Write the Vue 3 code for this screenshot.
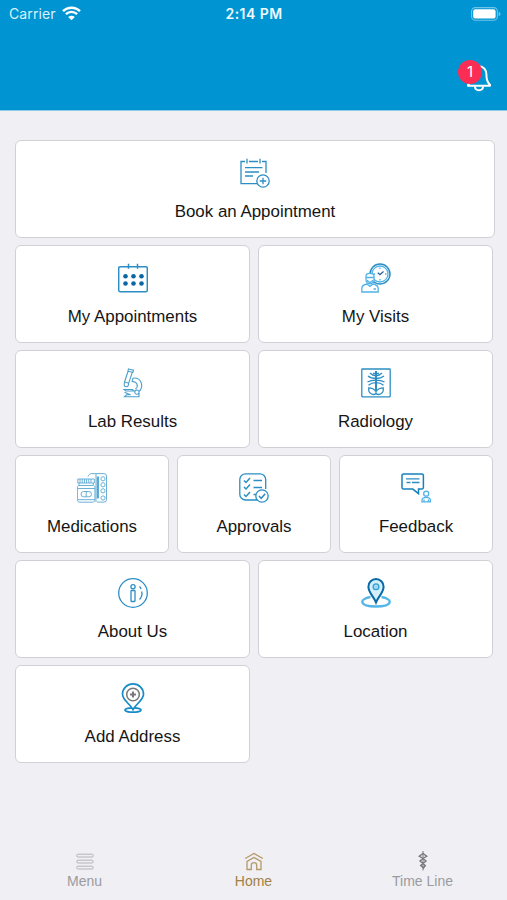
<template>
  <div class="screen">
    <header class="top">
      <div class="status-bar">
        <div class="carrier">
          <span>Carrier</span>
          <svg class="wifi" viewBox="0 0 19 15">
            <path d="M1 5.2C5.8.5 13.2.5 18 5.2M3.9 8.1c3.2-3 8-3 11.2 0" />
            <path class="wifi-dot" d="M6.2 10.9c1.9-1.7 4.7-1.7 6.6 0L9.5 14.3z" />
          </svg>
        </div>
        <span class="time">{{ time }}</span>
        <svg class="battery" viewBox="0 0 30 14">
          <rect class="battery-case" x=".6" y=".6" width="25.8" height="12.6" rx="3.8" />
          <rect class="battery-fill" x="2.2" y="2.2" width="22.4" height="9.4" rx="2.2" />
          <path class="battery-tip" d="M27.7 4.7c2.4.8 2.4 3.6 0 4.4z" />
        </svg>
      </div>
      <div class="nav-bar">
        <button class="bell">
          <svg viewBox="0 0 26 28">
            <path d="M13 2.3C8.5 2.3 5.6 6 5.6 10.5c0 5.5-1.3 8.4-3.6 10.2v1.1h22v-1.1c-2.3-1.8-3.6-4.7-3.6-10.2C20.4 6 17.5 2.3 13 2.3z" />
            <path d="M8.9 22.500c.5 5 7.700 5 8.200 0" />
          </svg>
          <span class="badge">{{ notifications }}</span>
        </button>
      </div>
    </header>

    <main class="tiles">
      <div class="row row-full">
        <div class="tile">
          <svg class="icon" viewBox="0 0 30 30">
            <path d="M5 3.500H1v22.200h16.500M9 3.500h9M22 3.500h4V15M7 .7v4.800M20 .7v4.800" />
            <path d="M5 9.700h17.500M5 14h14M5 18h8" />
            <circle cx="23" cy="23" r="6.200" />
            <path d="M23 19.700v6.600M19.700 23h6.600" />
          </svg>
          <span>Book an Appointment</span>
        </div>
      </div>

      <div class="row">
        <div class="tile">
          <svg class="icon strong" viewBox="0 0 30 30">
            <path d="M2.200 3.700h25.600a1.500 1.500 0 0 1 1.500 1.500v22a1.500 1.500 0 0 1-1.500 1.500H2.200a1.500 1.500 0 0 1-1.500-1.500v-22a1.500 1.500 0 0 1 1.500-1.500zM10.500.7v5M19.500.7v5" />
            <g class="dots">
              <circle v-for="x in [7.5, 15.5, 23.5]" :key="x" :cx="x" cy="13.2" r="2.3" />
              <circle v-for="x in [7.5, 15.5, 23.5]" :key="'b' + x" :cx="x" cy="20.5" r="2.3" />
            </g>
          </svg>
          <span>My Appointments</span>
        </div>
        <div class="tile">
          <svg class="icon" viewBox="0 0 30 30">
            <circle class="ring" cx="19" cy="11" r="10" />
            <circle class="light" cx="19" cy="11" r="8" />
            <path class="light" d="M19 4.500V6M19 16v1.500M12.500 11H14M24 11h1.500" />
            <path class="navy" d="m16.700 9.700 2.300 1.900 3.500-3" />
            <g class="light paper">
              <path d="M5 17v-4c0-3.500 8-3.500 8 0v4c0 5-8 5-8 0z" />
              <path d="M.8 29v-3.500c0-2.800 2.500-4 5.200-4.500l3 2.500 3-2.500c2.700.5 5.200 1.700 5.200 4.500V29z" />
            </g>
            <path class="light" d="M5 14.500h8M6.500 17c0 3 5 3 5 0M12.500 26h2.500" />
          </svg>
          <span>My Visits</span>
        </div>
      </div>

      <div class="row">
        <div class="tile">
          <svg class="icon soft" viewBox="0 0 30 30">
            <path d="m10.500 1 5 1.200-.6 2.200-5-1.200zM10 3.500 6.500 14l4.200 1.200L14.200 4.600M6.800 14.500c-1.300 1.500-.6 4.300 1.500 4.300 1.800 0 2.500-1.600 2-3.600" />
            <path d="M15 10.200c8-1.200 11.500 8 6 13.500v5.100H6.500l2-2h4l-6-2.500M14 13.700c5-.7 7 4.500 3.500 7.300M15 10.200l-1 3.500M6 21.500h8.500l1.500 1.500H8zM21 23.500c-1.200-2.500-4.500-1.500-4.200 1 .2 2.200 3.200 2.400 4.200.5" />
          </svg>
          <span>Lab Results</span>
        </div>
        <div class="tile">
          <svg class="icon" viewBox="0 0 30 30">
            <rect x=".8" y="1" width="28.4" height="27.8" rx=".5" />
            <path class="spine" d="M15 3v19" />
            <path d="M15 7.500c-2.500 0-4.500-.8-6-2.500M15 7.500c2.500 0 4.500-.8 6-2.500M15 10.500c-3.500 0-6-.8-8-2.500M15 10.500c3.500 0 6-.8 8-2.500M15 12.200c-3 0-6 .3-8.500 1.800M15 12.200c3 0 6 .3 8.500 1.800M15 14.700c-3 0-5.500.8-7.500 2.500M15 14.700c3 0 5.500.8 7.500 2.500M12 5.300h6" />
            <path d="M15 23.500c-2-2.800-4.300-3.700-7.300-3.700-.5 4.200 1.500 6.700 5 6.700 1.500 0 2.300-.8 2.300-2 0 1.200.8 2 2.300 2 3.500 0 5.500-2.500 5-6.700-3 0-5.300.9-7.300 3.700z" />
          </svg>
          <span>Radiology</span>
        </div>
      </div>

      <div class="row">
        <div class="tile">
          <svg class="icon fine" viewBox="0 0 30 30">
            <path d="M11 3.500c.8-2 2-2.900 4-2.900h12a2.500 2.500 0 0 1 2.500 2.500v23.500a2.500 2.500 0 0 1-2.500 2.500h-7M19 1v28" />
            <rect class="strip" x="20.2" y="4" width="1.4" height="21" />
            <circle cx="26" cy="5.800" r="2.100" />
            <circle cx="26" cy="11.800" r="2.100" />
            <circle cx="26" cy="17.800" r="2.100" />
            <circle cx="26" cy="25" r="2.100" />
            <path d="M.8 6h16.500v4H.8zM2 10v2.200c-1.300.7-1.600 1.500-1.600 3v11.500c0 1.600 1 2.500 2.500 2.500h12.500c1.500 0 2.500-1 2.500-2.500V15.200c0-1.500-.3-2.300-1.600-3V10M3 6v4M5.200 6v4M7.400 6v4M9.600 6v4M11.800 6v4M14 6v4M.5 15.500h17.400M.5 26.700h17.400M2 12.500h14" />
            <rect x="4" y="18.5" width="10.5" height="5.3" rx="2.65" />
            <path d="M9.200 18.500v5.300" />
          </svg>
          <span>Medications</span>
        </div>
        <div class="tile">
          <svg class="icon" viewBox="0 0 30 30">
            <path d="M18 27H6.500A5.700 5.700 0 0 1 .8 21.300V6.500A5.700 5.700 0 0 1 6.500.8H21a5.700 5.700 0 0 1 5.700 5.700V16" />
            <path class="check" d="m5 7.500 2 2L11 5M5 14l2 2 4-4.500M5 21.500l2 2 4-4.500M14.500 7.500H23M14.500 14.500H23M14.500 21.500H17" />
            <circle cx="23" cy="23" r="6.2" />
            <path class="check" d="m20 23 2.200 2.300 4-4.600" />
          </svg>
          <span>Approvals</span>
        </div>
        <div class="tile">
          <svg class="icon" viewBox="0 0 30 30">
            <path class="bubble" d="M2.600.9h18.200a1.600 1.600 0 0 1 1.600 1.600v12a1.600 1.600 0 0 1-1.600 1.600h-3.300v4.600l-5.700-4.600H2.600A1.600 1.600 0 0 1 1 14.500v-12A1.600 1.600 0 0 1 2.600.9z" />
            <path d="M5 5.800h13.500M11 9.500h7.500M5.500 9.500h4" />
            <circle class="light" cx="25.2" cy="20.7" r="2.5" />
            <path class="light" d="M21 28.800v-1.500c0-4 8.400-4 8.400 0v1.500zM23 26.500v2M27.400 26.500v2" />
          </svg>
          <span>Feedback</span>
        </div>
      </div>

      <div class="row">
        <div class="tile">
          <svg class="icon" viewBox="0 0 30 30">
            <circle cx="15" cy="15" r="14.3" />
            <circle cx="15" cy="8.8" r="2.1" />
            <rect x="13" y="12.5" width="4" height="11" rx=".5" />
            <path d="M21.500 8.500c.7.700 1.200 1.500 1.600 2.500M23.700 13.500c.7 3-.2 6-2.200 8" />
          </svg>
          <span>About Us</span>
        </div>
        <div class="tile">
          <svg class="icon" viewBox="0 0 30 30">
            <path class="orbit" d="M9.500 19c-12 2-11.500 9.500 5.500 9.500s17.500-7.500 5.500-9.500" />
            <path class="pin" d="M15 24.300C13 19 7.400 14.500 7.400 8.700a7.600 7.600 0 0 1 15.200 0C22.600 14.500 17 19 15 24.300z" />
            <circle class="halo" cx="15" cy="8.700" r="2.900" />
          </svg>
          <span>Location</span>
        </div>
      </div>

      <div class="row">
        <div class="tile">
          <svg class="icon" viewBox="0 0 30 30">
            <ellipse class="address" cx="15" cy="27" rx="8" ry="2.2" />
            <path class="address paper" d="M15 26.500C12 21 4.500 17 4.500 11.200a10.500 10.300 0 0 1 21 0C25.500 17 18 21 15 26.500z" />
            <circle class="gray" cx="15" cy="11.500" r="6.300" />
            <path class="gray plus" d="M15 8.500v6M12 11.500h6" />
          </svg>
          <span>Add Address</span>
        </div>
        <div class="tile-spacer"></div>
      </div>
    </main>

    <nav class="tab-bar">
      <a class="tab">
        <svg viewBox="0 0 20 20">
          <rect v-for="y in [3.2, 9.2, 15.2]" :key="y" x="1.7" :y="y" width="16.6" height="2.8" rx="1.4" />
        </svg>
        <span>Menu</span>
      </a>
      <a class="tab active">
        <svg viewBox="0 0 20 20">
          <path d="M1.200 7.500 10 2.500l8.800 5M3 18.500v-8L10 6.500l7 4v8h-4.300v-4.300c0-3.400-5.400-3.400-5.400 0v4.300z" />
        </svg>
        <span>Home</span>
      </a>
      <a class="tab timeline">
        <svg viewBox="0 0 20 20">
          <path d="M10 0v19.500" />
          <path class="snake" d="M10 2.500 6.300 5.300 10 7.500l3 2.500-3 2.500-2.300 2L10 16.500M10 2.500l3.700 2.800L10 7.500 7 10l3 2.500 2.300 2L10 17.500" />
        </svg>
        <span>Time Line</span>
      </a>
    </nav>
  </div>
</template>

<script setup>
import { ref } from 'vue'

const time = ref('2:14 PM')
const notifications = ref(1)
</script>

<style>
body {
  margin: 0;
  background: #efeff4;
}
</style>

<style scoped>
.screen {
  display: flex;
  flex-direction: column;
  width: 100%;
  height: 100vh;
  background: #efeff4;
  font-family: "Liberation Sans", Arial, sans-serif;
}

.top {
  box-sizing: border-box;
  height: 111px;
  background: #0095d2;
  border-bottom: 1px solid #8fcbe6;
  color: #fff;
}

.status-bar {
  display: grid;
  grid-template-columns: 1fr auto 1fr;
  align-items: center;
  height: 27px;
  padding: 0 6px 0 9px;
  font-family: Inter, sans-serif;
  font-size: 14px;
}

.carrier {
  display: flex;
  align-items: center;
  gap: 6px;
  color: #d9f1fb;
  letter-spacing: 0.1px;
}

.wifi {
  width: 19px;
  height: 15px;
  fill: none;
  stroke: #fff;
  stroke-width: 2.4;
}

.wifi-dot {
  fill: #fff;
  stroke: none;
}

.time {
  margin-right: 2px;
  color: #effaff;
  font-weight: 600;
  letter-spacing: 0.45px;
}

.battery {
  justify-self: end;
  width: 30px;
  height: 14px;
}

.battery-case {
  fill: none;
  stroke: #6fc4e8;
  stroke-width: 1.1;
}

.battery-fill {
  fill: #fff;
}

.battery-tip {
  fill: #6fc4e8;
}

.nav-bar {
  display: flex;
  justify-content: flex-end;
  padding: 37px 15px 0;
}

.bell {
  position: relative;
  width: 26px;
  height: 28px;
  padding: 0;
  border: 0;
  background: none;
}

.bell svg {
  display: block;
  width: 26px;
  height: 28px;
  fill: none;
  stroke: #fff;
  stroke-width: 2;
  stroke-linejoin: round;
}

.badge {
  position: absolute;
  top: -4px;
  left: -8px;
  width: 24px;
  height: 24px;
  border-radius: 50%;
  background: #fc2d55;
  color: #fff;
  font-family: Inter, sans-serif;
  font-size: 15px;
  line-height: 24px;
  text-align: center;
}

.tiles {
  display: flex;
  flex: 1;
  flex-direction: column;
  gap: 7px;
  padding: 29px 14px 0 15px;
}

.row {
  display: flex;
  gap: 8px;
  height: 98px;
}

.row-full {
  margin-right: -2px;
}

.tile,
.tile-spacer {
  box-sizing: border-box;
  flex: 1 1 0;
  border: 1px solid transparent;
}

.tile {
  display: flex;
  flex-direction: column;
  align-items: center;
  padding-top: 17px;
  border-color: #d0d0d6;
  border-radius: 6px;
  background: #fff;
  color: #151515;
  font-size: 16.9px;
  line-height: 20px;
}

.tile span {
  margin-top: 14px;
}

.icon {
  width: 30px;
  height: 30px;
  fill: none;
  stroke: #2d8ec4;
  stroke-width: 1.3;
}

.icon.strong {
  stroke-width: 1.5;
}

.icon.soft {
  stroke: #4a9fce;
  stroke-width: 1.1;
}

.icon.fine {
  stroke: #5aa8d4;
  stroke-width: 0.9;
}

.dots {
  fill: #0967a5;
  stroke: none;
}

.ring {
  stroke-width: 1.5;
}

.light {
  stroke: #50b3e7;
}

.paper {
  fill: #fff;
}

.navy {
  stroke: #30659c;
}

.spine {
  stroke-width: 2;
}

.icon .strip {
  fill: #2d8ec4;
}

.check {
  stroke-width: 1.5;
}

.bubble {
  stroke: #1681bd;
  stroke-width: 1.5;
}

.orbit {
  stroke: #54b5e6;
  stroke-width: 2.3;
}

.pin {
  fill: #d3effc;
  stroke: #0869a7;
  stroke-width: 2;
}

.halo {
  fill: #a1d9f3;
  stroke: #349dd4;
}

.address {
  stroke: #168bc8;
  stroke-width: 1.7;
}

.gray {
  stroke: #77777a;
  stroke-width: 1.5;
}

.plus {
  stroke-width: 2;
}

.tab-bar {
  display: grid;
  grid-template-columns: repeat(3, 1fr);
  height: 49px;
}

.tab {
  display: flex;
  flex-direction: column;
  align-items: center;
  color: #9b9b9f;
  font-size: 14px;
  line-height: 20px;
}

.tab svg {
  width: 20px;
  height: 20px;
  fill: none;
  stroke: #b5b5b8;
  stroke-width: 1;
}

.tab.active {
  color: #a08045;
}

.tab.active svg {
  stroke: #b59a69;
  stroke-width: 1.3;
}

.tab.timeline svg {
  stroke: #77777b;
}

.snake {
  stroke-width: 1.4;
}
</style>
